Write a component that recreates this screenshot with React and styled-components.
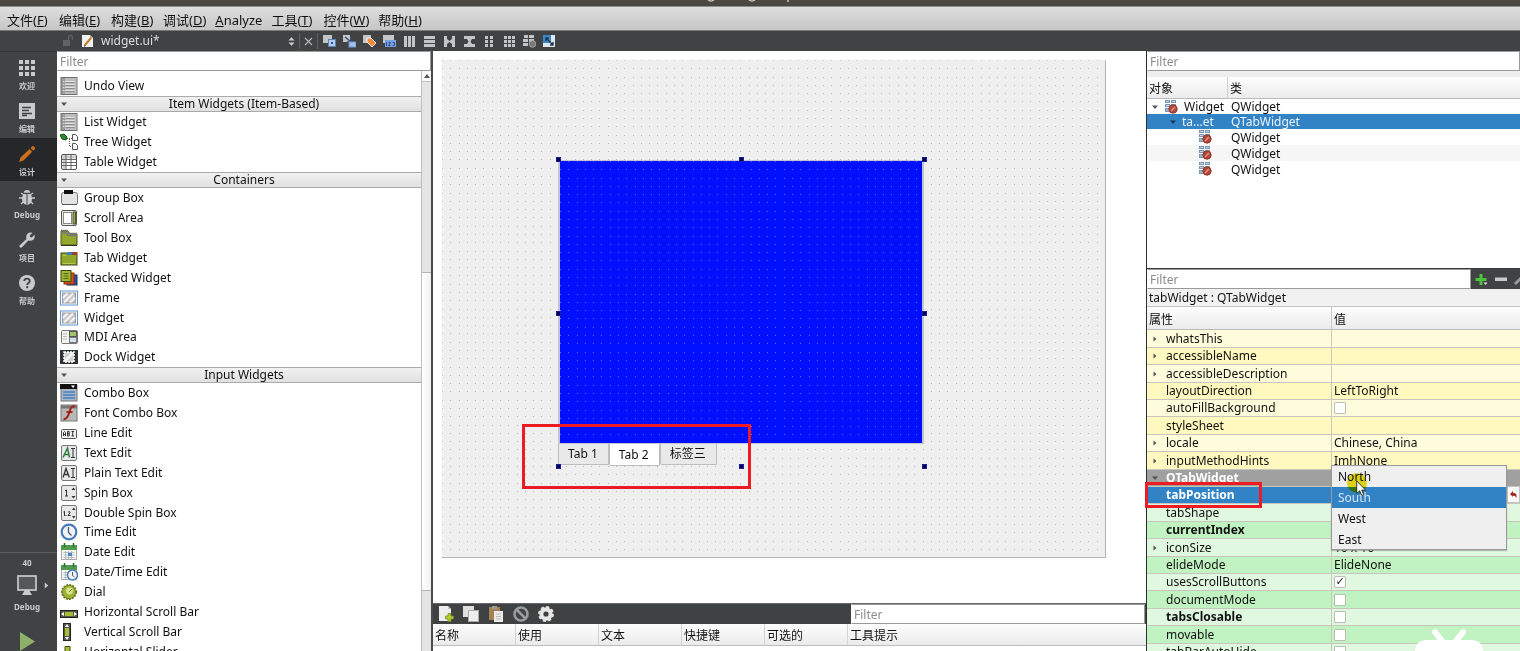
import React from "react";
import styled, { createGlobalStyle, css } from "styled-components";

const GlobalStyle = createGlobalStyle`
  *, *::before, *::after { box-sizing: border-box; }
  html, body, #root { height: 100%; }
  body {
    margin: 0;
    overflow: hidden;
    background: #404244;
    color: #111;
    font: 12px/16px "Noto Sans", "Noto Sans CJK SC", sans-serif;
  }
  button, input { font: inherit; color: inherit; }
  button { padding: 0; border: 0; background: none; }
  ul { margin: 0; padding: 0; list-style: none; }
  svg { display: block; flex: none; }
`;

const dark = "#404244";
const blue = "#3283c5";
const headerFill = "linear-gradient(#fdfdfd, #ebebeb)";

/* ---------- window frame ---------- */

const Window = styled.div`
  display: flex;
  flex-direction: column;
  height: 100vh;
  overflow: hidden;
`;

const TitleStrip = styled.header`
  height: 6px;
  flex: none;
  display: flex;
  justify-content: center;
  background: #4b4843;
`;

const MenuBar = styled.nav`
  display: flex;
  flex: none;
  gap: 9px;
  height: 25px;
  padding: 2px 7px 0;
  border-top: 1px solid #8e8d8a;
  border-bottom: 1px solid #7a7a7a;
  background: linear-gradient(#dedede, #c6c6c6);
  font-size: 13px;
  line-height: 22px;
`;

const MenuButton = styled.button`
  min-width: 43px;
  text-align: left;
  white-space: nowrap;
  line-height: 22px;
`;

const EditorBar = styled.div`
  display: flex;
  flex: none;
  align-items: center;
  height: 20px;
  padding-left: 63px;
  background: ${dark};
  color: #dcdcdc;
  font-size: 12px;
`;

const DocumentPicker = styled.button`
  display: flex;
  align-items: center;
  gap: 7px;
  width: 214px;
  margin-left: 7px;
  text-align: left;
`;

const PickerName = styled.span`
  flex: 1;
`;

const BarDivider = styled.span`
  width: 1px;
  height: 16px;
  margin: 0 4px;
  background: #5d5f61;
`;

const ToolButtons = styled.div`
  display: flex;
  gap: ${(p) => p.$gap}px;
  padding-left: ${(p) => p.$inset}px;
`;

const Body = styled.div`
  display: grid;
  grid-template-columns: 57px 374px minmax(0, 1fr) 374px;
  flex: 1;
  min-height: 0;
`;

/* ---------- mode bar ---------- */

const ModeBar = styled.aside`
  display: flex;
  flex-direction: column;
  background: ${dark};
  border-top: 1px solid #353739;
  color: #c9cacb;
  overflow: hidden;
`;

const ModeButton = styled.button`
  display: flex;
  flex-direction: column;
  align-items: center;
  gap: 4px;
  height: 43px;
  flex: none;
  padding-top: 8px;
  padding-right: 3px;
  font-size: 8px;
  font-weight: 700;
  line-height: 12px;
  background: ${(p) => (p.$active ? "#262728" : "none")};
`;

const KitArea = styled.div`
  display: flex;
  flex-direction: column;
  align-items: center;
  height: 99px;
  flex: none;
  margin-top: auto;
  padding: 4px 3px 0 0;
  border-top: 1px solid #5c5e60;
  font-size: 8px;
  font-weight: 700;
  line-height: 12px;
`;

const KitButton = styled.button`
  display: flex;
  align-items: center;
  gap: 6px;
  padding: 6px 0 5px 13px;
`;

const RunButton = styled.button`
  margin-top: 19px;
`;

/* ---------- shared filter field ---------- */

const FilterInput = styled.input`
  display: block;
  flex: ${(p) => (p.$width ? "none" : "1")};
  width: ${(p) => p.$width || "100%"};
  min-width: 0;
  height: 20px;
  padding: 0 2px;
  border: 1px solid #9a9a9a;
  border-left-color: #fff;
  border-radius: 0;
  outline: 0;
  background: #fff;
  &::placeholder { color: #8c8c8c; opacity: 1; }
`;

/* ---------- widget box ---------- */

const WidgetBox = styled.section`
  display: flex;
  flex-direction: column;
  min-height: 0;
  background: #fff;
`;

const FilterRow = styled.div`
  display: flex;
  flex: none;
`;

const BoxScroll = styled.div`
  display: grid;
  grid-template-columns: minmax(0, 1fr) 10px;
  flex: 1;
  min-height: 0;
`;

const Groups = styled.div`
  padding-top: 5px;
  overflow: hidden;
`;

const GroupTitle = styled.h2`
  display: flex;
  align-items: center;
  height: 16px;
  margin: 0;
  padding-left: 4px;
  border-top: 1px solid #aaa;
  border-bottom: 1px solid #aaa;
  background: linear-gradient(#f1f1f1, #e0e0e0);
  font-size: 12px;
  font-weight: 400;
  line-height: 14px;
`;

const GroupName = styled.span`
  flex: 1;
  text-align: center;
`;

const WidgetItem = styled.li`
  display: flex;
  align-items: center;
  gap: 6px;
  height: 20px;
  padding-left: 3px;
  white-space: nowrap;
  &:nth-child(7n) { height: 19px; }
`;

const ScrollTrack = styled.div`
  display: flex;
  flex-direction: column;
  border-left: 1px solid #c0c0c0;
  background: #e4e4e4;
`;

const ScrollArrow = styled.button`
  display: grid;
  place-items: center;
  height: 11px;
  flex: none;
  border-bottom: 1px solid #c0c0c0;
  background: #fafafa;
`;

const ScrollThumb = styled.div`
  height: 319px;
  margin-top: 190px;
  border-top: 1px solid #b5b5b5;
  border-bottom: 1px solid #b5b5b5;
  background: linear-gradient(90deg, #fff, #f1f1f1);
`;

/* ---------- design canvas ---------- */

const Centre = styled.main`
  display: flex;
  flex-direction: column;
  min-height: 0;
  border-left: 2px solid #4a4b4d;
  background: #fff;
`;

const Form = styled.div`
  position: relative;
  flex: 1;
  margin: 9px 40px 45px 9px;
  border-right: 1px solid #b4b4b4;
  border-bottom: 1px solid #b4b4b4;
  background: #efefef;
`;

const DotLayer = styled.svg`
  position: absolute;
  inset: 0;
  width: 100%;
  height: 100%;
`;

const PlacedTabs = styled.div`
  position: absolute;
  left: 116px;
  top: 100px;
  width: 366px;
  height: 307px;
`;

const TabPage = styled.div`
  position: relative;
  height: 284px;
  border: 1px solid #c4c4d4;
  border-width: 1px 2px;
  background: #0010ff;
`;

const TabRow = styled.div`
  position: relative;
  display: flex;
  align-items: flex-start;
`;

const TabButton = styled.button`
  height: ${(p) => (p.$active ? 22 : 21)}px;
  padding: 0 10px 0 9px;
  border: 1px solid #bdbdbd;
  border-top: 0;
  border-radius: 0 0 2px 2px;
  background: ${(p) => (p.$active ? "#fff" : "#e9e9e9")};
  line-height: 20px;
  white-space: nowrap;
`;

const Handle = styled.span`
  position: absolute;
  left: ${(p) => p.$x}%;
  top: ${(p) => p.$y}%;
  width: 5px;
  height: 5px;
  margin: -3px 0 0 -2px;
  border: 1px solid #1c1c9c;
  background: #00004a;
`;

const Highlight = styled.div`
  position: absolute;
  border: 3px solid #ed1c24;
  pointer-events: none;
  ${(p) =>
    p.$target === "tabs"
      ? css`left: 80px; top: 364px; width: 229px; height: 65px;`
      : css`left: -2px; top: 175px; width: 117px; height: 26px; z-index: 2;`}
`;

/* ---------- action editor ---------- */

const ActionPane = styled.section`
  flex: none;
  height: 48px;
  overflow: hidden;
`;

const ActionBar = styled.div`
  display: flex;
  align-items: center;
  justify-content: space-between;
  height: 21px;
  padding-right: 1px;
  border-top: 1px solid #6a6a6a;
  background: #404142;
`;

const ActionTable = styled.table`
  width: 100%;
  table-layout: fixed;
  border-collapse: separate;
  border-spacing: 0;
  th {
    height: 22px;
    padding: 2px 2px 0;
    border-right: 1px solid #d2d2d2;
    border-bottom: 1px solid #bdbdbd;
    background: ${headerFill};
    font-size: 12px;
    font-weight: 400;
    text-align: left;
  }
  th:last-child { border-right: 0; }
`;

/* ---------- right column ---------- */

const RightColumn = styled.div`
  display: flex;
  flex-direction: column;
  min-height: 0;
  border-left: 1px solid #2d2e2f;
  background: #eee;
`;

const Inspector = styled.section`
  flex: none;
  height: 218px;
  border-bottom: 1px solid #3a3a3a;
  background: #fff;
`;

const Spacer = styled.div`
  height: 6px;
  background: #eee;
`;

const TreeTable = styled.table`
  width: 100%;
  table-layout: fixed;
  border-collapse: separate;
  border-spacing: 0;
  th {
    height: 22px;
    padding: 2px 2px 0;
    border-bottom: 1px solid #bbb;
    background: ${headerFill};
    font-weight: 400;
    text-align: left;
  }
  th + th { border-left: 1px solid #cfcfcf; }
  td { padding: 0 0 0 4px; height: 15px; line-height: 15px; white-space: nowrap; }
  tr:nth-child(n + 3) td { height: 16px; }
`;

const TreeRow = styled.tr`
  background: ${(p) => (p.$selected ? blue : p.$striped ? "#f6f6f6" : "#fff")};
  color: ${(p) => (p.$selected ? "#eaf3fb" : "inherit")};
`;

const TreeCell = styled.div`
  display: flex;
  align-items: center;
  gap: 6px;
  height: 15px;
  padding-left: ${(p) => p.$depth}px;
`;

const Properties = styled.section`
  flex: 1;
  min-height: 0;
`;

const PropertyBar = styled.div`
  display: flex;
  align-items: center;
  height: 20px;
  overflow: hidden;
  background: ${dark};
`;

const PropertyTools = styled.div`
  display: flex;
  align-items: center;
  gap: 7px;
  width: 49px;
  flex: none;
  padding-left: 4px;
`;

const ObjectName = styled.p`
  margin: 0;
  height: 18px;
  padding-left: 2px;
  border-bottom: 1px solid #c4c4c4;
  background: #f1f1f1;
  line-height: 18px;
`;

const PropertyArea = styled.div`
  position: relative;
`;

const PropertyTable = styled.table`
  width: 100%;
  table-layout: fixed;
  border-collapse: separate;
  border-spacing: 0;
  th {
    height: 23px;
    padding: 3px 2px 0;
    border-bottom: 1px solid #bbb;
    background: ${headerFill};
    font-weight: 400;
    text-align: left;
  }
  th + th, td + td { border-left: 1px solid #c9c9bd; }
`;

const tones = {
  y0: "#fffcdc", y1: "#fff8bf", g0: "#dff8df", g1: "#c1f2c1",
  group: "#a0a0a0", picked: blue,
};

const PropertyRow = styled.tr`
  background: ${(p) => tones[p.$tone]};
  color: ${(p) => (p.$tone === "group" || p.$tone === "picked" ? "#fff" : "inherit")};
  font-weight: ${(p) => (p.$bold ? 700 : 400)};
  td {
    height: 17px;
    padding: 0 2px;
    border-bottom: 1px solid #c6c6bd;
    line-height: 16px;
    font-weight: inherit;
  }
  &:nth-child(5n + 1) td, &:nth-child(5n + 3) td { height: 18px; }
`;

const PropertyName = styled.div`
  display: flex;
  align-items: center;
  height: 16px;
`;

const Expander = styled.span`
  width: 17px;
  padding-left: 3px;
`;

const PlainValue = styled.span`
  font-weight: 400;
`;

const CheckBox = styled.input`
  appearance: none;
  display: grid;
  place-items: center;
  width: 12px;
  height: 12px;
  margin: 0;
  border: 1px solid #bdbdb5;
  border-radius: 1px;
  background: #fff;
  &:checked::before {
    content: "✓";
    color: #111;
    font: 700 11px/10px "DejaVu Sans", sans-serif;
  }
`;

const Popup = styled.ul`
  position: absolute;
  left: 184px;
  top: 158px;
  width: 176px;
  border: 1px solid #999;
  background: #efefef;
  box-shadow: 0 1px 1px #8888;
  margin: 0;
`;

const PopupItem = styled.li`
  height: ${(p) => (p.$last ? 20 : 21)}px;
  padding-left: 6px;
  line-height: 21px;
  background: ${(p) => (p.$selected ? blue : "none")};
  color: ${(p) => (p.$selected ? "#d6e6f4" : "inherit")};
`;

const ResetButton = styled.button`
  position: absolute;
  right: 0;
  top: 179px;
  display: grid;
  place-items: center;
  width: 13px;
  height: 17px;
  border: 1px solid #c2c2c2;
  background: #fafafa;
`;

const PointerGlow = styled.span`
  position: absolute;
  left: 200px;
  top: 166px;
  width: 20px;
  height: 20px;
  border-radius: 50%;
  background: #eadf1c;
  mix-blend-mode: multiply;
`;

const Pointer = styled.svg`
  position: absolute;
  left: 209px;
  top: 173px;
`;

const Badge = styled.svg`
  position: fixed;
  right: 37px;
  bottom: 0;
`;

/* ---------- drawings ---------- */

const Tri = ({ dir = "down", color = "#555", s = 6 }) => (
  <svg width={s} height={s} viewBox="0 0 6 6" fill={color}>
    <path d={{ down: "M0 1.500h6L3 5z", right: "M1.500 .5v5L4.500 3z", up: "M0 5h6L3 1z" }[dir]} />
  </svg>
);

const modeIcons = {
  grid: <g fill="#c9cacb">{[0, 6, 12].flatMap((x) => [0, 6, 12].map((y) => <rect key={x + "-" + y} x={x} y={y} width="4" height="4" />))}</g>,
  edit: <><rect width="16" height="16" fill="#c9cacb" /><path d="M3 4.500h9M3 7.500h7M3 10.500h10M3 12.500h5" stroke="#404244" strokeWidth="1.500" /></>,
  design: <g fill="#c96f1d"><path d="M0 16l1.500-4.500L10.500 3 13.200 5.700 4.500 14.500zM11.500 2l1.500-1.500q1-1 2 0l.8.8q1 1 0 2L14.200 4.800z" /></g>,
  bug: <><path d="M2 4l3 2M14 4l-3 2M0 9h4M16 9h-4M2 15l3-3M14 15l-3-3" stroke="#c9cacb" strokeWidth="1.300" /><path d="M4.800 3.800Q5 1 8 1t3.200 2.800z" fill="#c9cacb" /><path d="M7.500 5v11Q3 14.500 3 9.500 3 6 5 5zM8.500 5v11q4.500-1.500 4.500-6.500Q13 6 11 5z" fill="#c9cacb" /></>,
  wrench: <path d="M.8 13.200L7.500 7q-1-3.500 1.200-5.500Q10.700-.2 13.500.8L10.800 3.500l.4 1.600 1.600.4L15.500 2.800q.8 2.800-1 4.700-2 1.700-5.200 1L3 15.300q-1.200.8-2.200-.2-.8-1 0-1.900z" fill="#c9cacb" />,
  help: <><circle cx="8" cy="8" r="8" fill="#c9cacb" /><path d="M5.300 6Q5.400 3.600 8 3.600T10.700 6Q10.700 7.300 9.400 8 8.200 8.700 8.200 10" fill="none" stroke="#404244" strokeWidth="1.900" /><rect x="7.200" y="11.200" width="2" height="2" fill="#404244" /></>,
};

const Box = ({ fill = "#e8e8e8", stroke = "#777" }) => (
  <rect x="1.500" y="1.500" width="15" height="15" rx="1.500" fill={fill} stroke={stroke} />
);
const Hatch = () => (
  <><rect x=".5" y="2" width="17" height="14" fill="#fff" stroke="#5c96d6" /><rect x="2.500" y="4" width="13" height="10" fill="#c6c6c6" stroke="#999" /><path d="M3 9l4.500-4.500M4 13.500L13 4.500M10 13.500l5-5" stroke="#f4f4f4" strokeWidth="2" /></>
);
const Calendar = () => (
  <><rect x="1.500" y="3.500" width="15" height="13" fill="#f5f5f2" stroke="#aaa" /><rect x="1" y="2" width="16" height="5" fill="#4f9a4f" /><path d="M4.500 0v4M13.500 0v4" stroke="#2d6b2d" strokeWidth="1.500" /><path d="M3.500 9.500h11M3.500 12h11M3.500 14.500h11M5.500 8v8M8.500 8v8M11.500 8v8" stroke="#aab3b8" strokeWidth=".8" /></>
);

const ListGlyph = (
  <><rect x="1" y=".5" width="16" height="17" fill="#9c9c9c" stroke="#6f6f6f" /><rect x="5" y="1" width="11.500" height="16" fill="#bdbdbd" /><path d="M5.500 4.500h9M5.500 7.500h9M5.500 10.500h9M5.500 13.500h9" stroke="#e4e4e4" /><path d="M5.500 5.500h9M5.500 8.500h9M5.500 11.500h9M5.500 14.500h9" stroke="#8c8c8c" /><path d="M3 4.500h1.500M3 7.500h1.500M3 10.500h1.500M3 13.500h1.500" stroke="#ddd" /></>
);

const glyphs = {
  list: ListGlyph,
  tree: <><path d="M0 2l4-1 3 3-1 3-4-1z" fill="#2e8a2e" stroke="#174d17" /><path d="M7 5.500h5M9.500 6v7.500h3" stroke="#555" strokeDasharray="1 1" fill="none" /><path d="M12.500 1.500h3l2 2v4h-5zM12.500 10.500h3l2 2v4h-5z" fill="#fafafa" stroke="#555" /></>,
  table: <><Box fill="#fff" stroke="#555" /><path d="M2 4h14M4 2v14" stroke="#ccc" strokeWidth="3" /><path d="M6 2v14M11 2v14M2 6.500h14M2 9.500h14M2 12.500h14" stroke="#666" /></>,
  group: <><rect x="1.500" y="3.500" width="16" height="12" rx="2" fill="#e4e4e4" stroke="#777" /><path d="M2 15.500h15" stroke="#555" /><rect x="4" y="1" width="9" height="4" fill="#111" /></>,
  scroll: <><Box fill="#e9e9e4" stroke="#555" /><rect x="3.500" y="3.500" width="8" height="11" fill="#fff" stroke="#888" /><rect x="13" y="3" width="2.500" height="12" fill="#9ab02c" stroke="#333" strokeWidth=".8" /></>,
  toolbox: <><path d="M1 2h7l2 3h7v11H1z" fill="#93a82b" stroke="#4d5917" /><path d="M1 1.500h6l2 3h8M1 4h5l2 2.500h9" stroke="#777" strokeWidth="1.500" fill="none" /><path d="M1 16.500h16" stroke="#333" /></>,
  tab: <><rect x="1" y="4" width="16" height="12" fill="#8fa72b" stroke="#3b4514" /><path d="M7 3h5v3H7z" fill="#3a7fbc" /><path d="M12 3h5v3h-5z" fill="#a33c33" /><path d="M3 6.500h3M3 14.500h12" stroke="#b7cb55" /></>,
  stack: <><rect x="7" y="6" width="10" height="10" fill="#2352a4" stroke="#14315f" /><rect x="4" y="4" width="10" height="11" fill="#db4d17" stroke="#8b2e0b" /><rect x="1" y="1.500" width="10" height="11" fill="#9fb62e" stroke="#3f4913" /><path d="M3.500 4.500h5M3.500 7h5M3.500 9.500h5" stroke="#56641b" /></>,
  hatch: <Hatch />,
  mdi: <><rect x="1.500" y="2.500" width="16" height="13" rx="1" fill="#f2f2ee" stroke="#777" /><rect x="9.500" y="3.500" width="7" height="5" fill="#a4c46b" stroke="#555" /><rect x="9.500" y="9.500" width="7" height="5" fill="#d2e0ef" stroke="#777" /><path d="M3 6h4M3 8.500h4M3 11h4" stroke="#bbb" /></>,
  dock: <><rect y="2" width="18" height="14" fill="#2e3338" /><rect x="4" y="4" width="10" height="10" fill="#cfcfcf" stroke="#fff" strokeWidth="1.500" strokeDasharray="2 1" /><path d="M5 13l8-8" stroke="#f4f4f4" strokeWidth="3" /></>,
  combo: <><rect x="1" y="1" width="16" height="16" fill="#a9b6c4" stroke="#777" /><rect y="0" width="17" height="5" fill="#111" /><path d="M11 1.500h4L13 4z" fill="#fff" /><path d="M3 8h12M3 11h12M3 14h12" stroke="#5f8cc2" strokeWidth="2" /></>,
  fontcombo: <><rect x="1" y="1" width="16" height="16" fill="#b8b8b8" stroke="#777" /><path d="M1 3h16" stroke="#777" strokeWidth="3" /><path d="M15 2.500q-4-1-5.500 5-1.500 7-6 8M6.500 8h6" fill="none" stroke="#a3241a" strokeWidth="2" /></>,
  line: <><rect x="1.500" y="5.500" width="15" height="9" rx="1" fill="#eee" stroke="#555" /><path d="M3.500 12V8.500l1-1 1 1V12M3.500 10.500h2M7.500 12V7.500h1.700v4.500zM7.500 9.700h2M11.500 7.500H14M12.700 7.500V12M11.500 12H14" stroke="#222" strokeWidth=".9" fill="none" /></>,
  text: <><Box /><path d="M3 13.500L7.500 4l2 9.500M4.800 10.500h4" stroke="#2e7d42" strokeWidth="1.500" fill="none" /><path d="M11 4.500h4M13 4.500v9M11 13.500h4" stroke="#333" /></>,
  plain: <><Box /><path d="M3 13.500L6 4.500l3.300 9M4.200 10.500h4" stroke="#333" strokeWidth="1.300" fill="none" /><path d="M11 4.500h4M13 4.500v9M11 13.500h4" stroke="#333" /></>,
  spin: <><Box /><path d="M5 7l1.500-1v6M5 12h3" stroke="#333" fill="none" /><path d="M11.500 6h4l-2-2.500zM11.500 12h4l-2 2.500z" fill="#333" /></>,
  dspin: <><Box /><path d="M3.500 8l1-.7V12M8 8q2.500-1 2 .8L8 11.500h2.700M6 11v1" stroke="#333" fill="none" /><path d="M12 6h3.500l-1.700-2.500zM12 12h3.500l-1.700 2.500z" fill="#333" /></>,
  time: <><circle cx="9" cy="9" r="7.300" fill="#eef4f8" stroke="#477bb8" strokeWidth="2.200" /><path d="M8.500 4v5.500l3 3" stroke="#556" strokeWidth="1.300" fill="none" /></>,
  date: <><Calendar /><rect x="8" y="10" width="4" height="3" fill="#4a86c5" /></>,
  datetime: <><Calendar /><circle cx="12.500" cy="12" r="5" fill="#eef4f8" stroke="#477bb8" strokeWidth="1.500" /><path d="M12.500 9v3.500l2 1.500" stroke="#556" fill="none" /></>,
  dial: <><circle cx="9" cy="9" r="7" fill="#6e7f1d" stroke="#6b7a22" strokeWidth="2" strokeDasharray="2 1" /><circle cx="9" cy="9" r="6.200" fill="#9db534" /><circle cx="9.500" cy="8" r="3.400" fill="#d7e58f" /><path d="M9 9l3-3" stroke="#6f7f22" /></>,
  hscroll: <><rect x=".5" y="7.500" width="17" height="7" fill="#55554c" stroke="#222" /><rect x="5" y="9" width="8" height="4" fill="#a7bd33" /><path d="M4 9v4l-3-2zM14 9v4l3-2z" fill="#fff" /></>,
  vscroll: <><rect x="3.500" y=".5" width="7" height="17" fill="#55554c" stroke="#222" /><rect x="5" y="5" width="4" height="8" fill="#a7bd33" /><path d="M5 4h4L7 1zM5 14h4l-2 3z" fill="#fff" /></>,
  hslider: <><path d="M0 9h18v3H0z" fill="#555" /><path d="M5 3.500h5v7l-2.500 3L5 10.500z" fill="#a7bd33" stroke="#3e4814" /></>,
};

const ToolIcon = ({ name, size = 13 }) => {
  const g = "#c4c5c6";
  const shapes = {
    widgets: <><rect x="0" y="0" width="9" height="8" fill={g} /><rect x="5.500" y="4.500" width="7" height="7" fill="#b5cbea" stroke="#5b83bd" /><rect x="8" y="7" width="2" height="2" fill="#2c5696" /></>,
    signals: <><rect x="0" y="0" width="7" height="7" fill={g} /><path d="M2 2l6 5M8 3.500V7H4" stroke="#35506f" strokeWidth="1.300" fill="none" /><rect x="6" y="7" width="7" height="5" fill="#a5c0e8" stroke="#7098d0" /></>,
    buddies: <><rect x="0" y="0" width="8" height="8" fill={g} /><path d="M4 3l4 0 5 5-4 4-5-5z" fill="#f08a3c" stroke="#fff" strokeWidth=".9" /></>,
    order: <><rect x="0" y="0" width="11" height="8" fill={g} /><rect x="2" y="5" width="11" height="7" fill="#7ba2dc" /><path d="M3.500 7v4M5.500 7.500h2l-2 3h2M9.500 7.500h2v3h-2" stroke="#1f4c92" fill="none" /></>,
    h: <path d="M1 1h3v11H1zM5 1h3v11H5zM9 1h3v11H9z" fill={g} />,
    v: <path d="M1 1h11v3H1zM1 5h11v3H1zM1 9h11v3H1z" fill={g} />,
    hs: <path d="M1 1h3v11H1zM9 1h3v11H9zM4 4l2.500 2L9 4v5L6.500 7 4 9z" fill={g} />,
    vs: <path d="M1 1h11v3H1zM1 9h11v3H1zM4 4h5L7.500 6.500 9 9H4l1.500-2.500z" fill={g} />,
    form: <path d="M2 1h3v3H2zM7 1h3v3H7zM2 5h3v3H2zM7 5h3v3H7zM2 9h3v3H2zM7 9h3v3H7z" fill={g} />,
    grid: <path d="M1 1h3v3H1zM5 1h3v3H5zM9 1h3v3H9zM1 5h3v3H1zM5 5h3v3H5zM9 5h3v3H9zM1 9h3v3H1zM5 9h3v3H5zM9 9h3v3H9z" fill={g} />,
    breakl: <><path d="M1 0h4v3H1zM6 0h5v3H6zM0 4h5v3H0zM0 8h5v3H0zM6 4h5v3H6z" fill={g} /><circle cx="9.500" cy="9" r="3.300" fill="#77787a" stroke="#a0a0a0" /></>,
    adjust: <><rect x="0" y="0" width="12" height="12" fill="#dce6ee" /><path d="M0 0h8v8H0z" fill="#3f87c0" /><path d="M3 3l7 7M3 6V3h3M10 7v3H7" stroke="#173a58" strokeWidth="1.400" fill="none" /></>,
  };
  return <svg width={size} height={size} viewBox="0 0 13 13">{shapes[name]}</svg>;
};

const QWidgetIcon = () => (
  <svg width="14" height="14" viewBox="0 0 14 14">
    <path d="M1 0h5v3H1zM7 0h5v3H7zM1 4h5v3H1zM7 4h5v3H7zM1 8h5v4H1z" fill="#7b97b8" />
    <path d="M2 1.500h3M8 1.500h3M2 5.500h3M2 10h3" stroke="#c4d4e6" />
    <circle cx="9" cy="9" r="4.500" fill="#b4483b" />
    <path d="M7 11l4-4" stroke="#dc9a8e" strokeWidth="1.300" />
    <circle cx="9" cy="9" r="4" fill="none" stroke="#96382d" />
  </svg>
);

const actionIcons = [
  ["New", <><path d="M1 0h9l3 3v12H1z" fill="#ededed" /><path d="M10 0l3 3h-3z" fill="#bbb" /><path d="M10 7.500h3v2.500h2.500v3H13v2.500h-3V13H7.500v-3H10z" fill="#aacb32" stroke="#718a1c" strokeWidth=".7" /></>],
  ["Copy", <><rect x="0" y="0" width="11" height="11" fill="#dedede" /><rect x="5.500" y="4.500" width="10" height="11" fill="#eee" stroke="#aaa" /></>],
  ["Paste", <><rect x="1" y="1" width="11" height="13" fill="#a5824f" /><rect x="4" y="0" width="5" height="3" fill="#999" /><rect x="6" y="5" width="9" height="11" fill="#ececec" /><path d="M8 8h5M8 10.500h5M8 13h5" stroke="#bbb" /></>],
  ["Delete", <><circle cx="8" cy="8" r="6.500" fill="none" stroke="#9a9b9c" strokeWidth="2.600" /><path d="M3.500 3.500l9 9" stroke="#9a9b9c" strokeWidth="2.600" /></>],
  ["Configure", <><circle cx="8" cy="8" r="6.700" fill="#e6e6e6" stroke="#e6e6e6" strokeWidth="2.500" strokeDasharray="3 2.260" /><circle cx="8" cy="8" r="6" fill="#e6e6e6" /><circle cx="8" cy="8" r="2.600" fill="#404142" /></>],
];

/* ---------- data ---------- */

const menus = [["文件", "F"], ["编辑", "E"], ["构建", "B"], ["调试", "D"], [null, "A"], ["工具", "T"], ["控件", "W"], ["帮助", "H"]];
const modes = [["grid", "欢迎"], ["edit", "编辑"], ["design", "设计"], ["bug", "Debug"], ["wrench", "项目"], ["help", "帮助"]];
const layoutTools = ["widgets", "signals", "buddies", "order", "h", "v", "hs", "vs", "form", "grid", "breakl", "adjust"];
const groups = [
  [null, [["list", "Undo View"]]],
  ["Item Widgets (Item-Based)", [["list", "List Widget"], ["tree", "Tree Widget"], ["table", "Table Widget"]]],
  ["Containers", [["group", "Group Box"], ["scroll", "Scroll Area"], ["toolbox", "Tool Box"], ["tab", "Tab Widget"], ["stack", "Stacked Widget"], ["hatch", "Frame"], ["hatch", "Widget"], ["mdi", "MDI Area"], ["dock", "Dock Widget"]]],
  ["Input Widgets", [["combo", "Combo Box"], ["fontcombo", "Font Combo Box"], ["line", "Line Edit"], ["text", "Text Edit"], ["plain", "Plain Text Edit"], ["spin", "Spin Box"], ["dspin", "Double Spin Box"], ["time", "Time Edit"], ["date", "Date Edit"], ["datetime", "Date/Time Edit"], ["dial", "Dial"], ["hscroll", "Horizontal Scroll Bar"], ["vscroll", "Vertical Scroll Bar"], ["hslider", "Horizontal Slider"]]],
];
const properties = [
  { name: "whatsThis", tone: "y0", open: "right" },
  { name: "accessibleName", tone: "y1", open: "right" },
  { name: "accessibleDescription", tone: "y0", open: "right" },
  { name: "layoutDirection", tone: "y1", value: "LeftToRight" },
  { name: "autoFillBackground", tone: "y0", check: false },
  { name: "styleSheet", tone: "y1" },
  { name: "locale", tone: "y0", open: "right", value: "Chinese, China" },
  { name: "inputMethodHints", tone: "y1", open: "right", value: "ImhNone" },
  { name: "QTabWidget", tone: "group", open: "down", bold: true },
  { name: "tabPosition", tone: "picked", bold: true },
  { name: "tabShape", tone: "g0" },
  { name: "currentIndex", tone: "g1", bold: true },
  { name: "iconSize", tone: "g0", open: "right", value: "16 x 16" },
  { name: "elideMode", tone: "g1", value: "ElideNone" },
  { name: "usesScrollButtons", tone: "g0", check: true },
  { name: "documentMode", tone: "g1", check: false },
  { name: "tabsClosable", tone: "g0", bold: true, check: false },
  { name: "movable", tone: "g1", check: false },
  { name: "tabBarAutoHide", tone: "g0", check: false },
];
const handles = [[0, 0], [50, 0], [100, 0], [0, 50], [100, 50], [0, 100], [50, 100], [100, 100]];
const dotSteps = [0, 8, 17, 25, 33, 41, 50];

const Dots = ({ id, color }) => (
  <DotLayer aria-hidden="true">
    <defs>
      <pattern id={id} width="58" height="58" patternUnits="userSpaceOnUse">
        {dotSteps.flatMap((x) => dotSteps.map((y) => <rect key={`${x}-${y}`} x={x} y={y} width="1" height="1" fill={color} />))}
      </pattern>
    </defs>
    <rect width="100%" height="100%" fill={`url(#${id})`} />
  </DotLayer>
);

/* ---------- page ---------- */

export default function App() {
  return (
    <Window>
      <GlobalStyle />
      <TitleStrip>
        <svg width="106" height="3" viewBox="0 0 106 3" fill="none" stroke="#c9c5bd" strokeWidth="1.500">
          <path d="M1 0q3 2 6 0M42 0q3 2 6 0M81 0v2" />
        </svg>
      </TitleStrip>
      <MenuBar>
        {menus.map(([label, key]) => (
          <MenuButton key={key}>{label ? <>{label}(<u>{key}</u>)</> : <><u>A</u>nalyze</>}</MenuButton>
        ))}
      </MenuBar>
      <EditorBar>
        <svg width="11" height="12" viewBox="0 0 11 12">
          <rect x="0" y="5" width="7" height="6" fill="#5f6163" /><path d="M5.500 5V2.500q0-2 2-2t2 2V5" fill="none" stroke="#5f6163" strokeWidth="1.300" />
        </svg>
        <DocumentPicker>
          <svg width="13" height="14" viewBox="0 0 13 14"><path d="M1 1h8l3 3v9H1z" fill="#f2f2ee" /><path d="M9 1l3 3H9z" fill="#aaa" /><path d="M4 11l6-7" stroke="#c87a28" strokeWidth="2" /><path d="M3 13l.5-2.500 1.500 1z" fill="#333" /></svg>
          <PickerName>widget.ui*</PickerName>
          <svg width="7" height="9" viewBox="0 0 7 9" fill="#d0d0d0"><path d="M.5 3.500h6l-3-3.200zM.5 5.500h6l-3 3.200z" /></svg>
        </DocumentPicker>
        <BarDivider />
        <button aria-label="Close document"><svg width="9" height="9" viewBox="0 0 9 9"><path d="M1 1l7 7M8 1L1 8" stroke="#b8b8b8" strokeWidth="1.100" /></svg></button>
        <BarDivider />
        <ToolButtons $gap={7} $inset={1}>
          {layoutTools.map((name) => <button key={name} aria-label={name}><ToolIcon name={name} /></button>)}
        </ToolButtons>
      </EditorBar>
      <Body>
        <ModeBar>
          {modes.map(([icon, label]) => (
            <ModeButton key={icon} $active={icon === "design"}>
              <svg width="16" height="16" viewBox="0 0 16 16">{modeIcons[icon]}</svg>
              {label}
            </ModeButton>
          ))}
          <KitArea>
            40
            <KitButton aria-label="Select kit">
              <svg width="20" height="21" viewBox="0 0 20 21"><rect x="1" y="1" width="18" height="14" fill="#55585a" stroke="#c9cacb" strokeWidth="1.700" /><path d="M8 15h4l3 5H5z" fill="#c9cacb" /></svg>
              <Tri dir="right" color="#c9cacb" s={7} />
            </KitButton>
            Debug
            <RunButton aria-label="Run"><svg width="15" height="19" viewBox="0 0 15 19"><path d="M0 0l15 9.500L0 19z" fill="#8db06a" /></svg></RunButton>
          </KitArea>
        </ModeBar>

        <WidgetBox>
          <FilterRow><FilterInput placeholder="Filter" aria-label="Filter widgets" /></FilterRow>
          <BoxScroll>
            <Groups>
              {groups.map(([title, items]) => (
                <React.Fragment key={title || "top"}>
                  {title && <GroupTitle><Tri /><GroupName>{title}</GroupName></GroupTitle>}
                  <ul>
                    {items.map(([icon, label]) => (
                      <WidgetItem key={label}>
                        <svg width="18" height="18" viewBox="0 0 18 18">{glyphs[icon]}</svg>
                        {label}
                      </WidgetItem>
                    ))}
                  </ul>
                </React.Fragment>
              ))}
            </Groups>
            <ScrollTrack>
              <ScrollArrow aria-label="Scroll up"><Tri dir="up" /></ScrollArrow>
              <ScrollThumb />
            </ScrollTrack>
          </BoxScroll>
        </WidgetBox>

        <Centre>
          <Form>
            <Dots id="form-dots" color="#b9b9b9" />
            <PlacedTabs>
              <TabPage><Dots id="page-dots" color="#6678ff" /></TabPage>
              <TabRow>
                <TabButton>Tab 1</TabButton>
                <TabButton $active>Tab 2</TabButton>
                <TabButton>标签三</TabButton>
              </TabRow>
              {handles.map(([x, y]) => <Handle key={`${x}-${y}`} $x={x} $y={y} />)}
            </PlacedTabs>
            <Highlight $target="tabs" />
          </Form>
          <ActionPane>
            <ActionBar>
              <ToolButtons $gap={9} $inset={5}>
                {actionIcons.map(([name, art]) => (
                  <button key={name} aria-label={name}><svg width="16" height="16" viewBox="0 0 16 16">{art}</svg></button>
                ))}
              </ToolButtons>
              <FilterInput $width="294px" placeholder="Filter" aria-label="Filter actions" />
            </ActionBar>
            <ActionTable>
              <colgroup>{[0, 1, 2, 3, 4].map((i) => <col key={i} width="83" />)}<col /></colgroup>
              <thead><tr>{["名称", "使用", "文本", "快捷键", "可选的", "工具提示"].map((t) => <th key={t}>{t}</th>)}</tr></thead>
            </ActionTable>
          </ActionPane>
        </Centre>

        <RightColumn>
          <Inspector>
            <FilterInput placeholder="Filter" aria-label="Filter objects" />
            <Spacer />
            <TreeTable>
              <colgroup><col width="80" /><col /></colgroup>
              <thead><tr><th>对象</th><th>类</th></tr></thead>
              <tbody>
                <TreeRow>
                  <td><TreeCell $depth={1}><Tri /><QWidgetIcon />Widget</TreeCell></td><td>QWidget</td>
                </TreeRow>
                <TreeRow $selected>
                  <td><TreeCell $depth={19}><Tri color="#123a5c" />ta...et</TreeCell></td><td>QTabWidget</td>
                </TreeRow>
                {[0, 1, 2].map((i) => (
                  <TreeRow key={i} $striped={i === 1}>
                    <td><TreeCell $depth={47}><QWidgetIcon /></TreeCell></td><td>QWidget</td>
                  </TreeRow>
                ))}
              </tbody>
            </TreeTable>
          </Inspector>
          <Properties>
            <PropertyBar>
              <FilterInput placeholder="Filter" aria-label="Filter properties" />
              <PropertyTools>
                <button aria-label="Add property"><svg width="13" height="13" viewBox="0 0 13 13"><path d="M4.500 1h3v4h4v3h-4v4h-3V8h-4V5h4z" fill="#4bc23c" /><path d="M8.500 9.500h4l-2 2.500z" fill="#ddd" /></svg></button>
                <button aria-label="Remove property"><svg width="12" height="12" viewBox="0 0 12 12"><rect y="4.500" width="12" height="3.500" fill="#c9cacb" /></svg></button>
                <button aria-label="Configure"><svg width="12" height="12" viewBox="0 0 12 12"><path d="M1 11l8-8" stroke="#999" strokeWidth="3" /></svg></button>
              </PropertyTools>
            </PropertyBar>
            <ObjectName>tabWidget : QTabWidget</ObjectName>
            <PropertyArea>
              <PropertyTable>
                <colgroup><col width="184" /><col /></colgroup>
                <thead><tr><th>属性</th><th>值</th></tr></thead>
                <tbody>
                  {properties.map(({ name, tone, open, bold, value, check }) => (
                    <PropertyRow key={name} $tone={tone} $bold={bold}>
                      <td><PropertyName><Expander>{open && <Tri dir={open} />}</Expander>{name}</PropertyName></td>
                      <td>
                        {value && <PlainValue>{value}</PlainValue>}
                        {check !== undefined && <CheckBox type="checkbox" aria-label={name} defaultChecked={check} />}
                      </td>
                    </PropertyRow>
                  ))}
                </tbody>
              </PropertyTable>
              <ResetButton aria-label="Reset"><svg width="7" height="8" viewBox="0 0 7 8"><path d="M0 3l3-3v2h1q3 0 2.500 5Q5.500 4.500 3 4.500V6z" fill="#a3261d" /></svg></ResetButton>
              <Popup role="listbox" aria-label="tabPosition">
                {["North", "South", "West", "East"].map((t) => (
                  <PopupItem key={t} role="option" aria-selected={t === "South"} $selected={t === "South"} $last={t === "East"}>{t}</PopupItem>
                ))}
              </Popup>
              <PointerGlow />
              <Pointer width="11" height="17" viewBox="0 0 11 17"><path d="M.7 1v12.500l3-2.700 2 4.700 2-.9-2-4.500h4z" fill="#fff" stroke="#222" strokeWidth=".9" /></Pointer>
              <Highlight $target="property" />
            </PropertyArea>
          </Properties>
        </RightColumn>
      </Body>
      <Badge width="68" height="22" viewBox="0 0 68 22" fill="#fff">
        <path d="M0 22q1-11 12-11h44q11 0 12 11z" /><path d="M20 3l7 9M48 3l-7 9" stroke="#fff" strokeWidth="6" strokeLinecap="round" />
      </Badge>
    </Window>
  );
}
